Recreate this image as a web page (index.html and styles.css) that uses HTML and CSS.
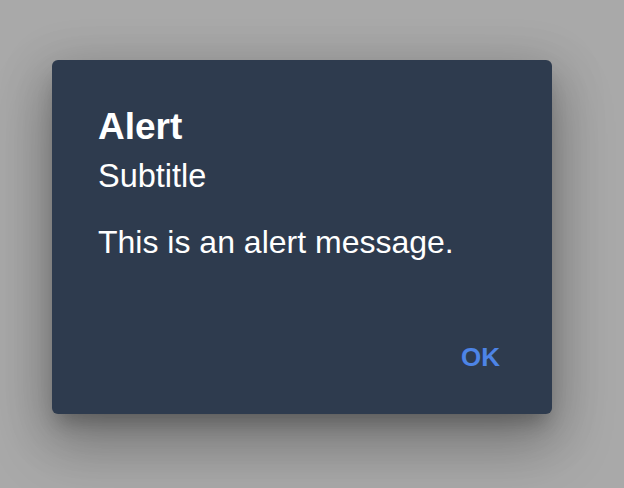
FILE: index.html
```html
<!DOCTYPE html>
<html lang="en">
<head>
<meta charset="utf-8">
<title>Alert</title>
<link rel="stylesheet" href="styles.css">
</head>
<body>
  <div class="backdrop">
    <div class="alert" role="alertdialog">
      <h2 class="alert-title">Alert</h2>
      <div class="alert-subtitle">Subtitle</div>
      <div class="alert-message">This is an alert message.</div>
      <div class="alert-actions">
        <button class="alert-btn" type="button">OK</button>
      </div>
    </div>
  </div>
</body>
</html>
```

FILE: styles.css
```css
html, body {
  margin: 0;
  height: 100%;
}
body {
  background: #a9a9a9;
  font-family: "Liberation Sans", Arial, sans-serif;
}
.backdrop {
  padding: 60px 0 0 52px;
}
.alert {
  width: 500px;
  height: 354px;
  box-sizing: border-box;
  background: #2e3b4e;
  border-radius: 6px;
  padding: 45px 52px 0 46px;
  color: #ffffff;
  display: flex;
  flex-direction: column;
  box-shadow: 0 30px 60px 4px rgba(0,0,0,.22), 0 12px 50px 8px rgba(0,0,0,.14), 0 14px 18px -6px rgba(0,0,0,.22);
}
.alert-title {
  margin: 0;
  font-size: 37px;
  line-height: 44px;
  font-weight: 700;
}
.alert-subtitle {
  margin-top: 8px;
  font-size: 32.5px;
  line-height: 38px;
}
.alert-message {
  margin-top: 28px;
  font-size: 32px;
  line-height: 38px;
}
.alert-actions {
  margin-top: 81px;
  display: flex;
  justify-content: flex-end;
}
.alert-btn {
  background: none;
  border: 0;
  padding: 0;
  font-family: inherit;
  font-size: 26px;
  line-height: 30px;
  font-weight: 700;
  color: #4d84e6;
}
```
